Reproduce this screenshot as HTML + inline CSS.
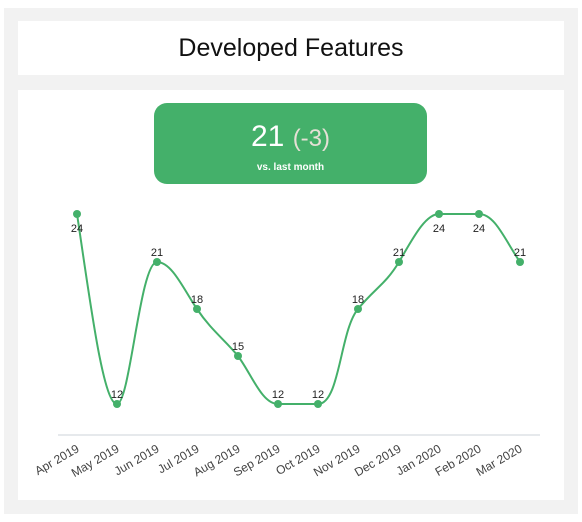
<!DOCTYPE html>
<html><head><style>
body{margin:0;width:582px;height:522px;background:#fff;font-family:"Liberation Sans",sans-serif;position:relative;overflow:hidden}
.outer{position:absolute;left:4px;top:8px;width:574px;height:506px;background:#f2f2f2}
.title{position:absolute;left:18px;top:21px;width:546px;height:54px;background:#fff;text-align:center;font-size:25px;line-height:54px;color:#111}
.chart{position:absolute;left:18px;top:90px;width:546px;height:410px;background:#fff}
.kpi{position:absolute;left:154px;top:103px;width:273px;height:81px;background:#44b06a;border-radius:13px;color:#fff;text-align:center}
.kpi .v{font-size:30px;margin-top:17px;line-height:34px}
.kpi .v span{color:#e6e0d6;font-size:24px}
.kpi .s{font-size:10px;font-weight:bold;margin-top:6px}
</style></head><body>
<div class="outer"></div>
<div class="title">Developed Features</div>
<div class="chart"></div>
<div class="kpi"><div class="v">21 <span>(-3)</span></div><div class="s">vs. last month</div></div>
<svg width="582" height="522" style="position:absolute;left:0;top:0" font-family="Liberation Sans, sans-serif">
<line x1="58" y1="435" x2="540" y2="435" stroke="#ccd3da" stroke-width="1"/>
<path d="M77,214 C90,300 103,404 117,404 C130,404 140,262 157,262 C172,262 184,290 197,309 C211,330 225,340 238,356 C252,375 262,404 278,404 L318,404 C340,404 340,330 358,309 C375,288 385,285 399,262 C412,240 425,214 439,214 L479,214 C495,214 505,240 520,262" fill="none" stroke="#44b06a" stroke-width="2"/>
<g fill="#44b06a">
<circle cx="77" cy="214" r="4"/><circle cx="117" cy="404" r="4"/><circle cx="157" cy="262" r="4"/><circle cx="197" cy="309" r="4"/><circle cx="238" cy="356" r="4"/><circle cx="278" cy="404" r="4"/><circle cx="318" cy="404" r="4"/><circle cx="358" cy="309" r="4"/><circle cx="399" cy="262" r="4"/><circle cx="439" cy="214" r="4"/><circle cx="479" cy="214" r="4"/><circle cx="520" cy="262" r="4"/>
</g>
<g font-size="11" fill="#222" text-anchor="middle">
<text x="77" y="232">24</text><text x="117" y="398">12</text><text x="157" y="256">21</text><text x="197" y="303">18</text><text x="238" y="350">15</text><text x="278" y="398">12</text><text x="318" y="398">12</text><text x="358" y="303">18</text><text x="399" y="256">21</text><text x="439" y="232">24</text><text x="479" y="232">24</text><text x="520" y="256">21</text>
</g>
<g font-size="12" fill="#444" text-anchor="end">
<text transform="translate(80,451) rotate(-30)">Apr 2019</text>
<text transform="translate(120,451) rotate(-30)">May 2019</text>
<text transform="translate(160,451) rotate(-30)">Jun 2019</text>
<text transform="translate(200,451) rotate(-30)">Jul 2019</text>
<text transform="translate(241,451) rotate(-30)">Aug 2019</text>
<text transform="translate(281,451) rotate(-30)">Sep 2019</text>
<text transform="translate(321,451) rotate(-30)">Oct 2019</text>
<text transform="translate(361,451) rotate(-30)">Nov 2019</text>
<text transform="translate(402,451) rotate(-30)">Dec 2019</text>
<text transform="translate(442,451) rotate(-30)">Jan 2020</text>
<text transform="translate(482,451) rotate(-30)">Feb 2020</text>
<text transform="translate(523,451) rotate(-30)">Mar 2020</text>
</g>
</svg>
</body></html>
